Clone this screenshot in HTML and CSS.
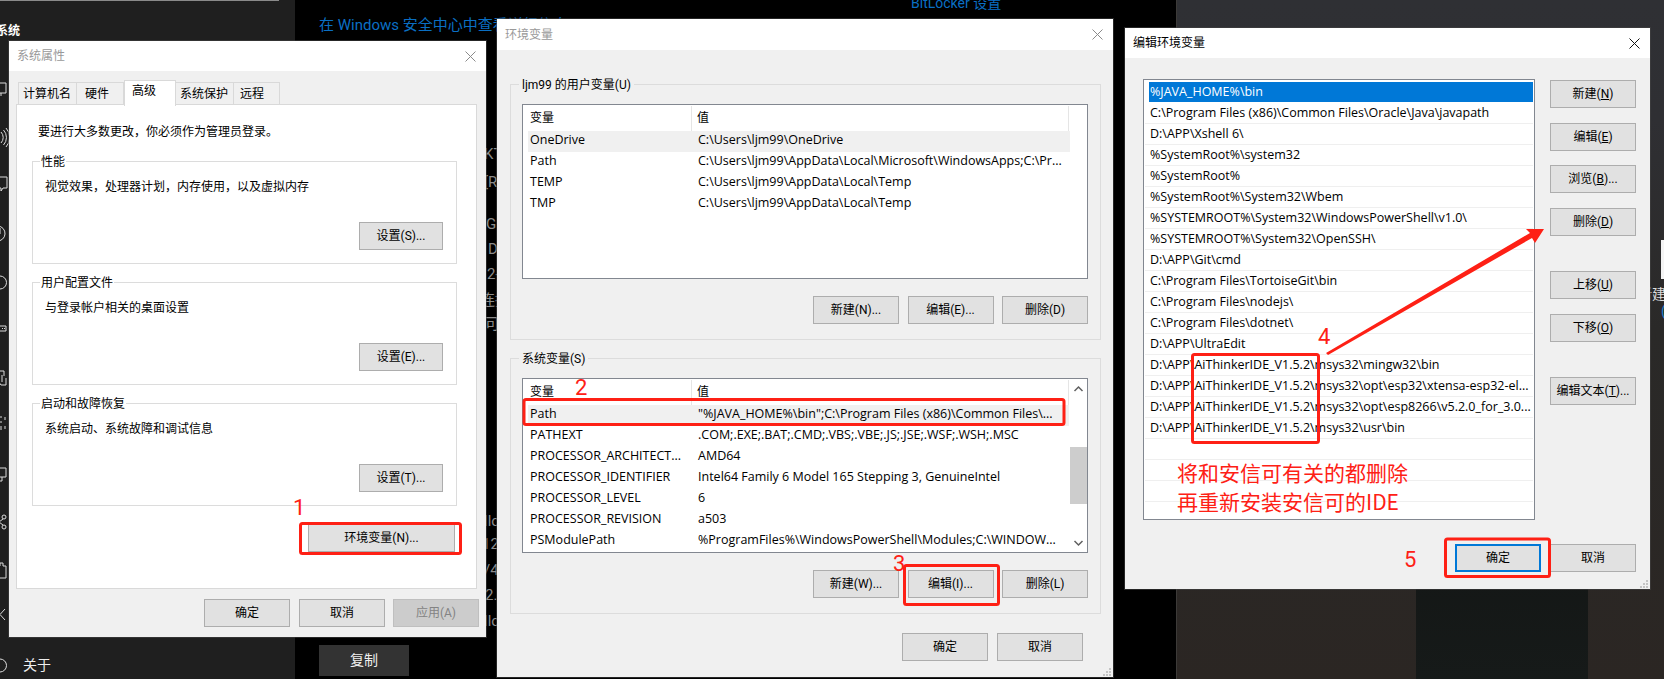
FILE: index.html
```html
<!DOCTYPE html>
<html lang="zh-CN">
<head>
<meta charset="utf-8">
<title>环境变量</title>
<link rel="stylesheet" href="styles.css">
</head>
<body>
<div class="desktop">
  <aside class="settings">
    <div class="settings-line"></div>
    <div class="settings-title">系统</div>
    <div class="settings-about">关于</div>
  </aside>
  <main class="about">
    <div class="about-top">
      <span class="link link-a">在 Windows 安全中心中查看详细信息</span>
      <span class="link link-b">BitLocker 设置</span>
    </div>
    <div class="copy-btn">复制</div>
  </main>
  <div class="wallpaper"></div>

  <svg class="under" width="1664" height="679" viewBox="0 0 1664 679" aria-hidden="true">
    <g class="side-icons">
      <path d="M-6 83H6V93H-6M1 93V96"/>
      <path d="M1 132a8 8 0 0 1 0 11M3.500 130a11 11 0 0 1 0 15M6 128a14 14 0 0 1 0 19"/>
      <path d="M-6 177H7V188H3L1 191V188H-6"/>
      <path d="M-2 226a7.500 7.500 0 1 1-1 15M0 228V234"/>
      <path d="M0 276a6.500 6.500 0 0 1 0 13"/>
      <path d="M-4 326H6V331H-4M2 328.500H3M4 328.500H5"/>
      <path d="M-4 371H4V376M6 378V385H1L-2 381M2 375V382"/>
      <path d="M-3 417H2M-3 422H2M-3 427H2M-3 429H2M5 417V420M5 426V429"/>
      <path d="M-6 468H6V477H-6M2 477V481H-2"/>
      <circle cx="4" cy="517" r="2"/><circle cx="4" cy="527" r="2"/><path d="M3 519L-1 522L3 525"/>
      <path d="M-4 566H0V563H3V566H6V578H-4"/>
      <path d="M5 609L0 614.500L5 620"/>
      <path d="M0 659a6.500 6.500 0 0 1 0 13"/>
    </g>
    <g class="strip-text">
      <text x="484" y="159">KTO</text>
      <text x="484" y="187">[R]</text>
      <text x="486" y="229">GI</text>
      <text x="488" y="254">D</text>
      <text x="487" y="279">2-</text>
      <text x="480" y="305">连接</text>
      <text x="485" y="329">可</text>
      <text x="484" y="526">llo</text>
      <text x="482" y="549">12</text>
      <text x="484" y="575">/4</text>
      <text x="485" y="600">2.1</text>
      <text x="484" y="626">llo</text>
    </g>
    <rect class="white-bit" x="1661" y="240" width="3" height="39"/>
    <text class="edge-text" x="1638" y="299">新建</text>
    <text class="edge-blue" x="1661" y="316">(</text>
  </svg>

  <section class="window win-props">
    <header class="titlebar inactive"><span>系统属性</span>
      <svg class="close" width="11" height="11" viewBox="0 0 11 11"><path d="M0.500 0.500L10.500 10.500M10.500 0.500L0.500 10.500"/></svg>
    </header>
    <div class="props-body">
      <nav class="tabs">
        <span class="tab tab-w1">计算机名</span>
        <span class="tab tab-w2">硬件</span>
        <span class="tab tab-on">高级</span>
        <span class="tab tab-w3">系统保护</span>
        <span class="tab tab-w4">远程</span>
      </nav>
      <div class="tab-panel">
        <p class="note">要进行大多数更改，你必须作为管理员登录。</p>
        <div class="group prop-group">
          <div class="legend">性能</div>
          <p class="desc">视觉效果，处理器计划，内存使用，以及虚拟内存</p>
          <button class="btn btn-s">设置(S)...</button>
        </div>
        <div class="group prop-group">
          <div class="legend">用户配置文件</div>
          <p class="desc">与登录帐户相关的桌面设置</p>
          <button class="btn btn-s">设置(E)...</button>
        </div>
        <div class="group prop-group">
          <div class="legend">启动和故障恢复</div>
          <p class="desc">系统启动、系统故障和调试信息</p>
          <button class="btn btn-s">设置(T)...</button>
        </div>
        <button class="btn btn-env">环境变量(N)...</button>
      </div>
      <footer class="foot-props">
        <button class="btn">确定</button>
        <button class="btn">取消</button>
        <button class="btn disabled">应用(A)</button>
      </footer>
    </div>
  </section>

  <section class="window win-env">
    <header class="titlebar inactive"><span>环境变量</span>
      <svg class="close" width="11" height="11" viewBox="0 0 11 11"><path d="M0.500 0.500L10.500 10.500M10.500 0.500L0.500 10.500"/></svg>
    </header>
    <div class="env-body">
      <div class="group env-group">
        <div class="legend">ljm99 的用户变量(U)</div>
        <div class="listview">
          <div class="lv-main">
            <div class="lv-head"><span class="hcol1">变量</span><span class="hcol2">值</span></div>
            <div class="lv-row hl"><span>OneDrive</span><span>C:\Users\ljm99\OneDrive</span></div>
            <div class="lv-row"><span>Path</span><span>C:\Users\ljm99\AppData\Local\Microsoft\WindowsApps;C:\Pr...</span></div>
            <div class="lv-row"><span>TEMP</span><span>C:\Users\ljm99\AppData\Local\Temp</span></div>
            <div class="lv-row"><span>TMP</span><span>C:\Users\ljm99\AppData\Local\Temp</span></div>
          </div>
        </div>
        <div class="lv-actions">
          <button class="btn">新建(N)...</button>
          <button class="btn">编辑(E)...</button>
          <button class="btn">删除(D)</button>
        </div>
      </div>
      <div class="group env-group">
        <div class="legend">系统变量(S)</div>
        <div class="listview">
          <div class="lv-main">
            <div class="lv-head"><span class="hcol1">变量</span><span class="hcol2">值</span></div>
            <div class="lv-row hl"><span>Path</span><span>"%JAVA_HOME%\bin";C:\Program Files (x86)\Common Files\...</span></div>
            <div class="lv-row"><span>PATHEXT</span><span>.COM;.EXE;.BAT;.CMD;.VBS;.VBE;.JS;.JSE;.WSF;.WSH;.MSC</span></div>
            <div class="lv-row"><span>PROCESSOR_ARCHITECT...</span><span>AMD64</span></div>
            <div class="lv-row"><span>PROCESSOR_IDENTIFIER</span><span>Intel64 Family 6 Model 165 Stepping 3, GenuineIntel</span></div>
            <div class="lv-row"><span>PROCESSOR_LEVEL</span><span>6</span></div>
            <div class="lv-row"><span>PROCESSOR_REVISION</span><span>a503</span></div>
            <div class="lv-row"><span>PSModulePath</span><span>%ProgramFiles%\WindowsPowerShell\Modules;C:\WINDOW...</span></div>
          </div>
          <div class="scrollbar">
            <svg class="sb-arrow" width="17" height="17" viewBox="0 0 17 17"><path d="M4.500 11L8.500 7L12.500 11"/></svg>
            <div class="sb-track"><div class="sb-thumb"></div></div>
            <svg class="sb-arrow" width="17" height="17" viewBox="0 0 17 17"><path d="M4.500 6L8.500 10L12.500 6"/></svg>
          </div>
        </div>
        <div class="lv-actions">
          <button class="btn">新建(W)...</button>
          <button class="btn">编辑(I)...</button>
          <button class="btn">删除(L)</button>
        </div>
      </div>
      <footer class="foot-env">
        <button class="btn">确定</button>
        <button class="btn">取消</button>
      </footer>
    </div>
    <svg class="grip" width="8" height="8" viewBox="0 0 8 8"><path d="M6 0h2v2H6zM3 3h2v2H3zM6 3h2v2H6zM0 6h2v2H0zM3 6h2v2H3zM6 6h2v2H6z"/></svg>
  </section>

  <section class="window win-edit">
    <header class="titlebar"><span>编辑环境变量</span>
      <svg class="close" width="11" height="11" viewBox="0 0 11 11"><path d="M0.500 0.500L10.500 10.500M10.500 0.500L0.500 10.500"/></svg>
    </header>
    <div class="edit-body">
      <div class="edit-main">
        <div class="pathlist">
          <div class="path sel">%JAVA_HOME%\bin</div>
          <div class="path">C:\Program Files (x86)\Common Files\Oracle\Java\javapath</div>
          <div class="path">D:\APP\Xshell 6\</div>
          <div class="path">%SystemRoot%\system32</div>
          <div class="path">%SystemRoot%</div>
          <div class="path">%SystemRoot%\System32\Wbem</div>
          <div class="path">%SYSTEMROOT%\System32\WindowsPowerShell\v1.0\</div>
          <div class="path">%SYSTEMROOT%\System32\OpenSSH\</div>
          <div class="path">D:\APP\Git\cmd</div>
          <div class="path">C:\Program Files\TortoiseGit\bin</div>
          <div class="path">C:\Program Files\nodejs\</div>
          <div class="path">C:\Program Files\dotnet\</div>
          <div class="path">D:\APP\UltraEdit</div>
          <div class="path">D:\APP\AiThinkerIDE_V1.5.2\msys32\mingw32\bin</div>
          <div class="path">D:\APP\AiThinkerIDE_V1.5.2\msys32\opt\esp32\xtensa-esp32-el...</div>
          <div class="path">D:\APP\AiThinkerIDE_V1.5.2\msys32\opt\esp8266\v5.2.0_for_3.0...</div>
          <div class="path">D:\APP\AiThinkerIDE_V1.5.2\msys32\usr\bin</div>
          <div class="path">&nbsp;</div>
          <div class="path">&nbsp;</div>
          <div class="path">&nbsp;</div>
        </div>
        <div class="side-btns">
          <button class="btn">新建(<u>N</u>)</button>
          <button class="btn">编辑(<u>E</u>)</button>
          <button class="btn">浏览(<u>B</u>)...</button>
          <button class="btn">删除(<u>D</u>)</button>
          <button class="btn far">上移(<u>U</u>)</button>
          <button class="btn">下移(<u>O</u>)</button>
          <button class="btn far">编辑文本(<u>T</u>)...</button>
        </div>
      </div>
      <footer class="foot-edit">
        <button class="btn default">确定</button>
        <button class="btn">取消</button>
      </footer>
    </div>
    <svg class="grip" width="8" height="8" viewBox="0 0 8 8"><path d="M6 0h2v2H6zM3 3h2v2H3zM6 3h2v2H6zM0 6h2v2H0zM3 6h2v2H3zM6 6h2v2H6z"/></svg>
  </section>

  <svg class="marks" width="1664" height="679" viewBox="0 0 1664 679">
    <g class="mark-boxes">
      <rect x="300.500" y="523.500" width="160" height="30" rx="2"/>
      <rect x="524" y="399.500" width="540" height="25" rx="2"/>
      <rect x="904.500" y="565.500" width="94" height="39" rx="2"/>
      <rect x="1192.500" y="354.500" width="126" height="88" rx="2"/>
      <rect x="1445.500" y="539" width="104" height="37.500" rx="2"/>
    </g>
    <polygon class="arrow" points="1326,353 1530,233 1526,229 1544,229 1535,243 1532,238 1328,355"/>
    <g class="mark-nums">
      <text x="293" y="515">1</text>
      <text x="575" y="395">2</text>
      <text x="893" y="571">3</text>
      <text x="1318" y="344">4</text>
      <text x="1404" y="567">5</text>
    </g>
    <text class="mark-note" x="1177" y="481">将和安信可有关的都删除</text>
    <text class="mark-note" x="1177" y="510">再重新安装安信可的IDE</text>
  </svg>
</div>
</body>
</html>
```

FILE: styles.css
```css
* { box-sizing: border-box; }
html, body { margin: 0; padding: 0; background: #000; }
body { font: 12px/16px Roboto, "Noto Sans CJK SC", sans-serif; color: #000; }
p { margin: 0; }

.desktop { position: relative; width: 1664px; height: 679px; overflow: hidden; display: flex; }

.settings { width: 295px; background: #1f1f1f; color: #fff; display: flex; flex-direction: column; overflow: hidden; }
.settings-line { width: 279px; height: 1px; background: #8a8a8a; }
.settings-title { margin: 21px 0 0 -4px; font-size: 12px; line-height: 18px; font-weight: 700; }
.settings-about { margin: auto 0 4px 23px; font-size: 14px; line-height: 20px; color: #eee; }

.about { width: 881px; background: #000; display: flex; flex-direction: column; }
.about-top { position: relative; height: 40px; }
.link { position: absolute; color: #0a6fc4; font-size: 15px; line-height: 20px; white-space: nowrap; }
.link-a { left: 24px; top: 15px; }
.link-b { left: 616px; top: -7px; font-size: 14px; }
.copy-btn { margin: auto 0 3px 24px; width: 90px; height: 31px; background: #333; color: #f0f0f0; font-size: 14px; line-height: 31px; text-align: center; }

.wallpaper {
  flex: 1;
  border-left: 1px solid #3c3a38;
  background:
    linear-gradient(#141716, #161a19) 239px 560px / 172px 119px no-repeat,
    linear-gradient(#2f3034 0, #2f2f33 120px, #2a2928 330px, #2b2623 679px);
}

.under { position: absolute; left: 0; top: 0; }
.side-icons { fill: none; stroke: #dcdcdc; stroke-width: 1; }
.strip-text { fill: #8c8c8c; font-size: 15px; font-family: Roboto, "Noto Sans CJK SC", sans-serif; }
.white-bit { fill: #f4f4f4; }
.edge-text { fill: #ddd; font-size: 14px; font-family: "Noto Sans CJK SC", sans-serif; }
.edge-blue { fill: #1c7fd0; font-size: 14px; font-family: Roboto, sans-serif; }

.window { position: absolute; background: #f0f0f0; display: flex; flex-direction: column; box-shadow: 0 0 0 1px rgba(70, 70, 70, .55); }
.win-props { left: 9px; top: 41px; width: 477px; height: 596px; }
.win-env { left: 497px; top: 19px; width: 616px; height: 658px; }
.win-edit { left: 1125px; top: 28px; width: 525px; height: 561px; }

.titlebar { flex: none; height: 30px; padding: 0 10px 0 8px; background: #fff; display: flex; align-items: center; justify-content: space-between; }
.titlebar.inactive { color: #999; }
.close { fill: none; stroke: #111; stroke-width: 1; }
.inactive .close { stroke: #8a8a8a; }
.win-env .titlebar { height: 31px; }

.btn { display: block; width: 86px; height: 28px; padding: 0; background: #e1e1e1; border: 1px solid #adadad; border-radius: 0; font: inherit; color: #000; white-space: nowrap; }
.btn.disabled { background: #ccc; border-color: #bfbfbf; color: #838383; }
.btn.default { border: 2px solid #0078d7; }

.props-body { flex: 1; display: flex; flex-direction: column; padding: 11px 9px 10px 7px; }
.tabs { display: flex; padding-left: 2px; height: 22px; align-items: flex-start; }
.tab { height: 23px; padding-left: 6px; border: 1px solid #d9d9d9; border-bottom: 0; border-left: 0; background: #f0f0f0; line-height: 22px; }
.tab-w1 { width: 59px; padding-left: 4px; border-left: 1px solid #d9d9d9; }
.tab-w2 { width: 47px; padding-left: 8px; }
.tab-w3 { width: 58px; padding-left: 4px; }
.tab-w4 { width: 46px; }
.tab-on { width: 52px; height: 26px; margin-top: -2px; padding-left: 7px; background: #fff; border-left: 1px solid #d9d9d9; line-height: 21px; position: relative; z-index: 1; }
.tab-panel { flex: 1; display: flex; flex-direction: column; background: #fff; border: 1px solid #d9d9d9; padding: 19px 19px 0 15px; --group-bg: #fff; }
.note { margin: 0 0 3px 6px; }
.group { border: 1px solid #dcdcdc; display: flex; flex-direction: column; }
.legend { flex: none; width: fit-content; height: 16px; margin: -8px 0 0 -1px; background: var(--group-bg); padding: 0 1px; white-space: nowrap; }
.prop-group { height: 103px; margin-top: 18px; padding: 0 13px 13px 8px; }
.desc { margin: 9px 0 0 4px; }
.btn-s { width: 84px; margin: auto 0 0 auto; }
.btn-env { width: 147px; margin: 18px 2px 0 auto; }
.foot-props { display: flex; justify-content: flex-end; gap: 9px; padding-top: 10px; margin-right: -2px; }
.foot-props .btn:nth-child(3) { margin-left: -1px; }

.env-body { flex: 1; display: flex; flex-direction: column; padding: 34px 12px 0 13px; gap: 18px; --group-bg: #f0f0f0; }
.env-group { height: 256px; padding: 0 12px 0 11px; }
.env-group .legend { padding: 0 3px; margin: -8px 0 11px -3px; }
.listview { height: 175px; display: flex; background: #fff; border: 1px solid #828790; padding-top: 1px; }
.lv-main { width: 547px; padding-left: 5px; overflow: hidden; }
.lv-head { height: 25px; display: flex; line-height: 24px; }
.hcol1 { width: 164px; padding-left: 2px; border-right: 1px solid #e5e5e5; }
.hcol2 { width: 377px; padding-left: 5px; border-right: 1px solid #e5e5e5; }
.lv-row { height: 21px; display: grid; grid-template-columns: 168px 1fr; padding-left: 2px; width: 542px; white-space: nowrap; font: 12.500px/17px "Open Sans", sans-serif; }
.lv-row.hl { background: #f0f0f0; }
.scrollbar { width: 18px; padding-left: 1px; display: flex; flex-direction: column; }
.sb-arrow { flex: none; fill: none; stroke: #606060; stroke-width: 1.5; }
.sb-track { flex: 1; }
.sb-thumb { height: 57px; margin-top: 50px; background: #cdcdcd; }
.lv-actions { display: flex; justify-content: flex-end; gap: 8.500px; margin-top: 17px; }
.foot-env { display: flex; justify-content: flex-end; gap: 9px; padding: 1px 18px 0 0; }

.edit-body { flex: 1; display: flex; flex-direction: column; padding: 21px 14px 0 18px; }
.edit-main { display: flex; gap: 15px; }
.pathlist { width: 392px; height: 441px; background: #fff; border: 1px solid #828790; padding: 1.500px 1px 0; overflow: hidden; }
.path { height: 21px; padding-left: 5px; border-bottom: 1px solid #efefef; white-space: nowrap; font: 12.500px/19px "Open Sans", sans-serif; }
.path.sel { color: #fff; border-bottom-color: transparent; background: linear-gradient(#0078d7, #0078d7) 4px 0 / 100% 100% no-repeat; }
.side-btns { display: flex; flex-direction: column; gap: 14.500px; padding-top: 1px; }
.side-btns .far { margin-top: 21px; }
.foot-edit { display: flex; justify-content: flex-end; gap: 9px; margin-top: 24px; }

.grip { position: absolute; right: 2px; bottom: 1px; fill: #c4c4c4; }

.marks { position: absolute; left: 0; top: 0; }
.mark-boxes { fill: none; stroke: #fe2015; stroke-width: 3; }
.arrow { fill: #fe2015; }
.mark-nums { fill: #fe2015; font-size: 22px; font-family: Roboto, sans-serif; }
.mark-note { fill: #fe2015; font-size: 21px; font-family: "Noto Sans CJK SC", sans-serif; }
```
